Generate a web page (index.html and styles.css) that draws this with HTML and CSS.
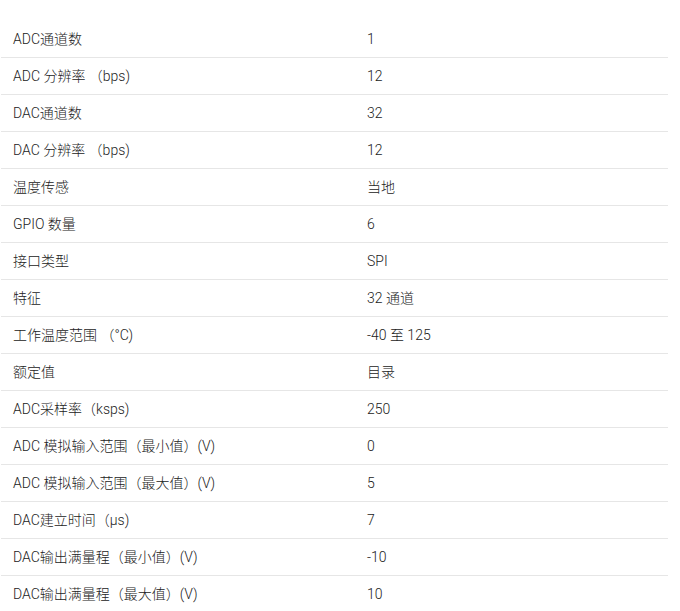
FILE: index.html
```html
<!DOCTYPE html>
<html lang="zh-CN">
<head>
<meta charset="utf-8">
<link rel="stylesheet" href="styles.css">
</head>
<body>
<div class="specs">
  <div class="row"><div class="k">ADC通道数</div><div class="v">1</div></div>
  <div class="row"><div class="k">ADC 分辨率 （bps)</div><div class="v">12</div></div>
  <div class="row"><div class="k">DAC通道数</div><div class="v">32</div></div>
  <div class="row"><div class="k">DAC 分辨率 （bps)</div><div class="v">12</div></div>
  <div class="row"><div class="k">温度传感</div><div class="v">当地</div></div>
  <div class="row"><div class="k">GPIO 数量</div><div class="v">6</div></div>
  <div class="row"><div class="k">接口类型</div><div class="v">SPI</div></div>
  <div class="row"><div class="k">特征</div><div class="v">32 通道</div></div>
  <div class="row"><div class="k">工作温度范围 （°C)</div><div class="v">-40 至 125</div></div>
  <div class="row"><div class="k">额定值</div><div class="v">目录</div></div>
  <div class="row"><div class="k">ADC采样率（ksps)</div><div class="v">250</div></div>
  <div class="row"><div class="k">ADC 模拟输入范围（最小值）(V)</div><div class="v">0</div></div>
  <div class="row"><div class="k">ADC 模拟输入范围（最大值）(V)</div><div class="v">5</div></div>
  <div class="row"><div class="k">DAC建立时间（µs)</div><div class="v">7</div></div>
  <div class="row"><div class="k">DAC输出满量程（最小值）(V)</div><div class="v">-10</div></div>
  <div class="row"><div class="k">DAC输出满量程（最大值）(V)</div><div class="v">10</div></div>
</div>
</body>
</html>
```
FILE: styles.css
```css
html, body {
  margin: 0;
  padding: 0;
  background: #fff;
}
body {
  font-family: Roboto, "Noto Sans CJK SC", sans-serif;
  font-size: 14px;
  font-weight: 300;
  color: #222;
}
.specs {
  padding-top: 21px;
  margin-left: 1px;
  width: 667px;
}
.row {
  display: grid;
  grid-template-columns: 354px 1fr;
  height: 36px;
  align-items: center;
  border-bottom: 1px solid #e6e6e6;
}
.k, .v {
  padding: 0 12px;
  line-height: 20px;
  white-space: nowrap;
}
```
